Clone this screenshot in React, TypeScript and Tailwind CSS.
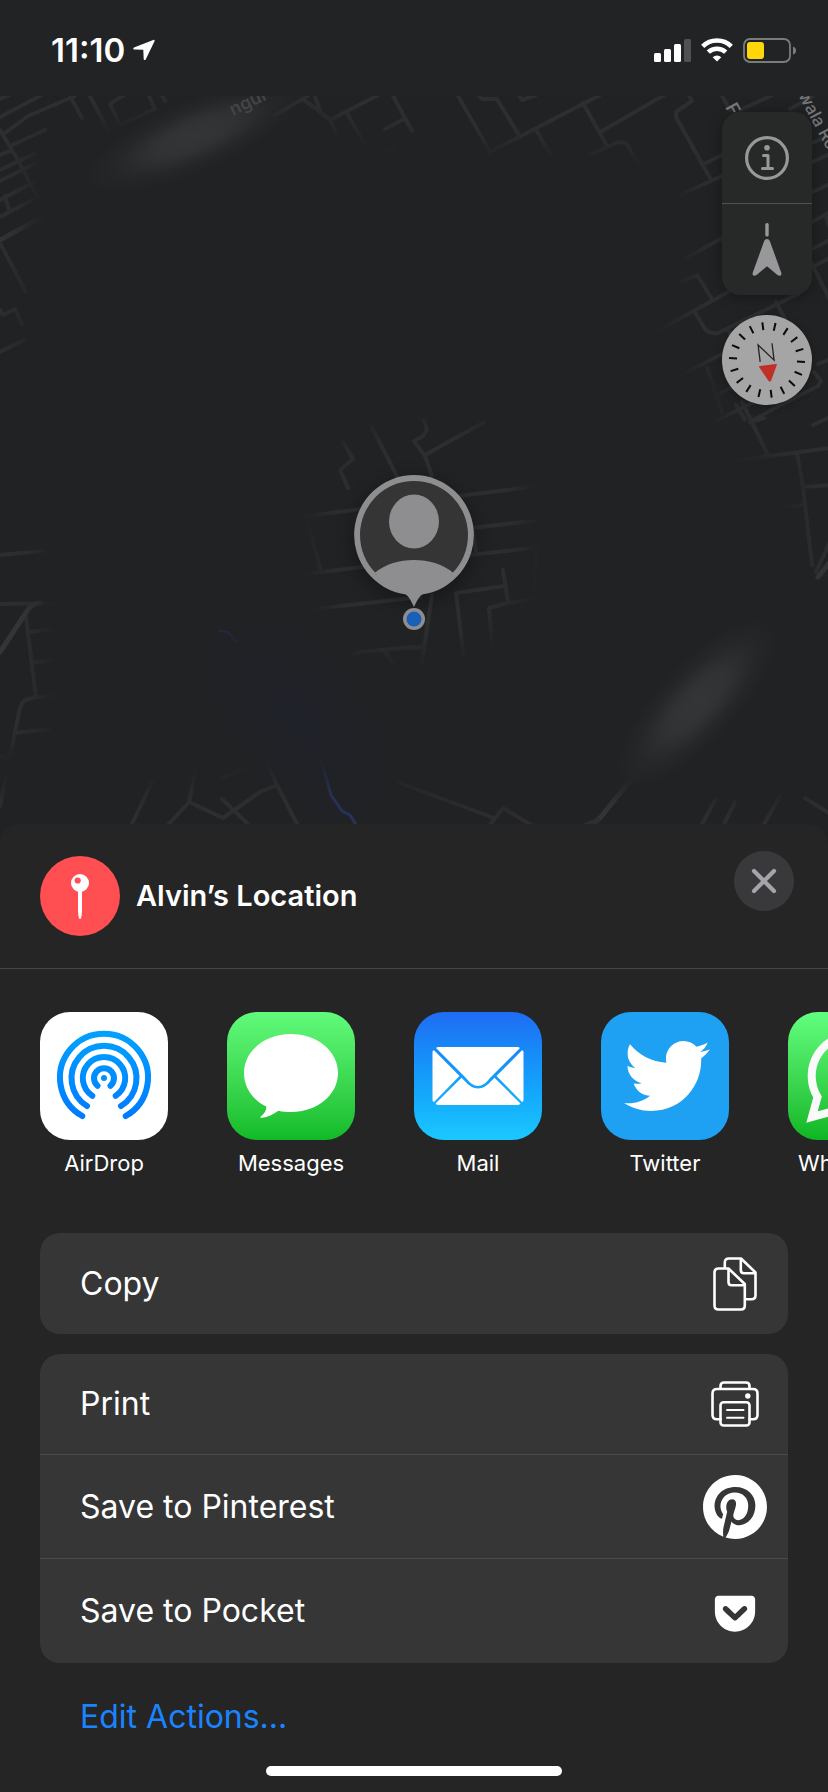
import type { ReactNode } from "react";
import { FaGetPocket, FaPinterest, FaTwitter } from "react-icons/fa";

const ROADS = [
  "M0 117 55 88 M0 99 15 92 M5 133 28 116 75 96 M0 130 18 160 38 198 M10 146 45 130",
  "M0 155 12 150 M0 170 34 154 M0 181 34 164 M0 200 34 182 M5 196 9 210 M0 217 34 199",
  "M0 243 26 292 M0 310 3 315 15 309 22 324 M0 352 24 340",
  "M70 96 82 118 M90 96 108 130 M124 95 110 104 120 125 155 109 148 94 M160 92 165 101",
  "M275 115 308 96 M302 99 315 108 330 120 M314 94 320 110 M330 120 384 92 M330 120 337 135 335 142 325 145 M347 113 372 157 394 149 M392 94 412 131 M385 129 404 119",
  "M457 94 490 152 M478 94 482 99 497 99 520 137 M518 94 522 100 536 95 M488 153 604 93 M536 130 550 154 M583 103 607 146 M602 131 666 94 M590 155 618 142 626 143 638 163",
  "M687 92 692 101 676 112 676 117 710 178 M704 164 728 152 M680 195 724 175 M720 92 730 110 M740 110 775 94 M790 109 812 97",
  "M808 145 830 135 M808 164 830 154 M808 194 830 184 M812 222 830 212 M826 217 830 228 M810 250 830 240 M810 268 830 258 M810 260 830 300",
  "M684 259 726 236 M680 282 697 275 712 299 M650 335 730 291 M694 311 705 329 Q709 334 718 333 L798 294 M728 330 734 342 M776 302 790 328 M650 335 660 362 648 370 M660 386 730 350 M707 368 722 413 M715 396 740 383 M686 436 760 399 M736 405 745 420 M742 402 768 455 M818 364 830 359 M814 372 821 381 818 386 775 408 750 422 764 418",
  "M718 463 830 448 M797 453 803 487 812 565 M804 487 830 485 M775 508 802 505 M813 425 830 417 M816 572 830 542",
  "M424 420 427 430 423 436 414 441 425 456 432 476 M425 455 484 422 M460 496 545 485 M472 528 550 519 M470 555 550 546 M473 532 476 552 M535 548 536 590",
  "M464 660 456 593 505 586 M503 570 508 602 M536 599 508 603 489 608 493 652 M432 595 421 668 M410 648 423 647",
  "M400 783 494 818 M489 826 503 808 533 826 M701 826 715 800 M723 826 735 802 M763 826 780 796 M805 798 830 814",
  "M0 555 44 551 M0 604 54 603 M26 617 36 697 M30 632 54 629 M35 662 64 660 M64 696 36 697 25 700 Q21 703 19 712 L0 806 M15 733 50 729 M0 756 6 758",
  "M370 424 398 478 M343 442 353 459 340 470 348 488 M298 517 370 508 M306 517 321 571 M298 575 370 566 M298 611 420 597 M346 662 Q350 653 362 652 L412 647 M385 652 400 674",
  "M131 826 152 782 M167 826 189 802 196 768 M189 802 223 818 260 792 277 785 M222 799 250 826 M222 778 265 758 277 785 298 826",
];

function MapCanvas() {
  return (
    <svg
      className="absolute inset-x-0 top-0 -bottom-5 h-[calc(100%+20px)] w-full"
      viewBox="0 96 828 748"
      preserveAspectRatio="xMidYMid slice"
      role="img"
      aria-label="Map"
    >
      <defs>
        <radialGradient id="water">
          <stop stopColor="#1f2129" />
          <stop offset="1" stopColor="#1f2129" stopOpacity="0" />
        </radialGradient>
        <radialGradient id="glow">
          <stop stopColor="#343537" />
          <stop offset=".35" stopColor="#343537" stopOpacity=".85" />
          <stop offset=".7" stopColor="#343537" stopOpacity=".25" />
          <stop offset="1" stopColor="#343537" stopOpacity="0" />
        </radialGradient>
        <filter id="soft" filterUnits="userSpaceOnUse" x="-60" y="0" width="960" height="900">
          <feGaussianBlur stdDeviation="12" />
        </filter>
        <filter id="shade" x="-40%" y="-40%" width="180%" height="180%">
          <feGaussianBlur stdDeviation="9" />
        </filter>
        <mask id="sharp" maskUnits="userSpaceOnUse" x="0" y="96" width="828" height="748">
          <g fill="#fff" filter="url(#soft)">
            <path d="M-60 30H900V900H-60V790H140L290 775 420 790 530 806 600 792 800 804V470L725 440V380L668 350 700 240 690 180 640 150 400 142 290 112 130 112 30 145 20 350 38 540 42 740-60 760Z" />
            <path d="M345 440 440 415 500 430 525 500V590L480 640 400 655 350 650 320 590V480Z" />
          </g>
        </mask>
      </defs>
      <rect x="0" y="96" width="828" height="748" fill="#212224" />
      <ellipse rx="130" ry="70" fill="url(#water)" transform="translate(296 718) rotate(52)" />
      <g mask="url(#sharp)" fill="none" stroke="#2d2e30" strokeWidth="4" strokeLinejoin="round" strokeLinecap="round">
        {ROADS.map((d) => (
          <path key={d} d={d} />
        ))}
        <path d="M0 240 44 216" stroke="#313234" strokeWidth="5" />
        <path d="M0 652 27 611Q31 604 40 603M818 577 830 562M588 828 600 818 632 778" stroke="#343537" strokeWidth="5" />
        <path d="M584 826 598 820" strokeWidth="5" />
        <path d="M320 756 331 795 342 811 350 815 358 828" stroke="#28325a" strokeWidth="3" />
      </g>
      <path d="M218 631 228 632 237 643" fill="none" stroke="#23283d" strokeWidth="2" />
      <g fill="url(#glow)">
        <ellipse rx="118" ry="36" transform="translate(194 136) rotate(-23)" />
        <ellipse rx="112" ry="40" transform="translate(697 703) rotate(-47)" />
      </g>
      <g fontFamily="Inter, sans-serif" fontWeight="600">
        <text transform="translate(233 116) rotate(-26)" fill="#434446" fontSize="18">ngur</text>
        <text transform="translate(725 107) rotate(62)" fill="#77787a" fontSize="18">F</text>
        <text transform="translate(798 95) rotate(62)" fill="#77787a" fontSize="17" fontWeight="500">wala Road</text>
      </g>
      <g>
        <circle cx="414" cy="540" r="62" fill="#000" opacity=".3" filter="url(#shade)" />
        <path d="M414 475a60 60 0 0 1 9 119.300C419 596 417 601 414 607 411 601 409 596 405 594.300A60 60 0 0 1 414 475Z" fill="#8e8e90" />
        <circle cx="414" cy="535" r="54" fill="#353535" />
        <ellipse cx="414" cy="521.500" rx="25" ry="27" fill="#8e8e90" />
        <path d="M375 572.500C386 564 399 560 414 560s28 4 39 12.500L440 588 414 592 388 588Z" fill="#8e8e90" />
        <circle cx="414" cy="619" r="11" fill="#8e8e90" />
        <circle cx="414" cy="619" r="7.500" fill="#1a5fb8" />
      </g>
    </svg>
  );
}

function Compass() {
  const ticks = Array.from({ length: 18 }, (_, i) => i * 20 - 7);
  return (
    <svg viewBox="0 0 90 90" className="size-full">
      <circle cx="45" cy="45" r="45" fill="#a5a5a6" />
      {ticks.map((angle) => (
        <path key={angle} d="M45 7v8" stroke="#0b0b0b" strokeWidth="2" transform={`rotate(${angle} 45 45)`} />
      ))}
      <g transform="rotate(-7 45 45)">
        <path d="M38 46V29L52 46V29" fill="none" stroke="#222" strokeWidth="1.300" />
        <path d="M36.500 51.500Q35.500 50 37.500 50H53Q55 50 54 51.500L46.500 66Q45.300 67.500 44 66Z" fill="#c03029" />
      </g>
    </svg>
  );
}

function StatusBar() {
  return (
    <header className="flex h-24 items-center justify-between bg-[#222325] pr-8 pl-[51px]">
      <div className="flex items-center gap-2 pt-1">
        <span className="text-[33px] leading-10 font-semibold">11:10</span>
        <svg viewBox="0 0 22 22" className="size-[22px]" aria-hidden="true">
          <path d="M20.300 1 1 8.600C-.1 9.100 0 10.500 1.200 10.500L10.300 10.700 10.700 20C10.700 21.300 12.200 21.500 12.700 20.400L21.500 2.200C21.900 1.200 21.200.6 20.300 1Z" fill="#fff" />
        </svg>
      </div>
      <div className="flex items-center gap-[10px] pt-1">
        <svg viewBox="0 0 37 23" className="h-[23px] w-[37px]" aria-hidden="true">
          <rect y="14" width="7" height="9" rx="1.500" fill="#fff" />
          <rect x="10" y="10" width="7" height="13" rx="1.500" fill="#fff" />
          <rect x="20" y="5" width="7" height="18" rx="1.500" fill="#fff" />
          <rect x="30" width="7" height="23" rx="1.500" fill="#505153" />
        </svg>
        <svg viewBox="0 0 32 24" className="h-6 w-8" aria-hidden="true">
          <g fill="none" stroke="#fff" strokeWidth="4.600">
            <path d="M1.700 8.300A20.500 20.500 0 0 1 30.300 8.300" />
            <path d="M7.300 14.200A12.500 12.500 0 0 1 24.700 14.200" />
          </g>
          <path d="M16 23.500 11.700 19.300A6.200 6.200 0 0 1 20.300 19.300Z" fill="#fff" />
        </svg>
        <svg viewBox="0 0 53 25" className="h-[25px] w-[53px]" aria-hidden="true">
          <rect x="1" y="1" width="46" height="23" rx="6" fill="none" stroke="#7b7c7e" strokeWidth="1.800" />
          <path d="M50 8.500Q53 9.500 53 12.500T50 16.500Z" fill="#7b7c7e" />
          <rect x="4" y="4" width="17" height="17" rx="3" fill="#ffd60a" />
        </svg>
      </div>
    </header>
  );
}

function MapControls() {
  return (
    <div className="absolute top-4 right-4 flex flex-col gap-5">
      <div className="flex w-[90px] flex-col divide-y divide-[#505152] rounded-[18px] bg-[#272828] shadow-[0_2px_14px_rgba(0,0,0,0.35)]">
        <button type="button" aria-label="Map information" className="flex h-[92px] items-center justify-center">
          <svg viewBox="0 0 44 44" className="size-11">
            <circle cx="22" cy="22" r="20.400" fill="none" stroke="#98989a" strokeWidth="3.200" />
            <circle cx="22" cy="11.800" r="2.800" fill="#98989a" />
            <path d="M18.500 19.500H23V32.500M17.500 32.500H27.500" fill="none" stroke="#98989a" strokeWidth="3" strokeLinecap="round" strokeLinejoin="round" />
          </svg>
        </button>
        <button type="button" aria-label="Track heading" className="flex h-[91px] items-center justify-center">
          <svg viewBox="0 0 30 53" className="h-[53px] w-[30px]">
            <rect x="13.300" width="3.400" height="13.500" rx="1.500" fill="#98989a" />
            <path d="M15 16C16.300 16 17.200 16.700 17.800 18L29.200 49.500C30.200 52.500 27.500 53.800 25.500 52L15 43.200 4.500 52C2.500 53.800-.2 52.500.8 49.500L12.200 18C12.800 16.700 13.700 16 15 16Z" fill="#98989a" />
          </svg>
        </button>
      </div>
      <button type="button" aria-label="Compass" className="size-[90px] rounded-full shadow-[0_2px_10px_rgba(0,0,0,0.3)]">
        <Compass />
      </button>
    </div>
  );
}

function AirDropIcon() {
  return (
    <svg viewBox="0 0 128 128" className="size-full">
      <defs>
        <linearGradient id="air" gradientUnits="userSpaceOnUse" x1="0" y1="19" x2="0" y2="108">
          <stop stopColor="#00a2ff" />
          <stop offset="1" stopColor="#0079ff" />
        </linearGradient>
      </defs>
      <g fill="none" stroke="url(#air)" strokeWidth="6" strokeLinecap="round">
        <path d="M42.300 104A44 44 0 1 1 85.700 104" />
        <path d="M47 94A32.500 32.500 0 1 1 81 94" />
        <path d="M52.300 83.800A21.200 21.200 0 1 1 75.700 83.800" />
        <path d="M57.500 73.800A10 10 0 1 1 70.500 73.800" />
      </g>
      <circle cx="64" cy="66" r="3" fill="#0090ff" />
    </svg>
  );
}

function MessagesIcon() {
  return (
    <svg viewBox="0 0 128 128" className="size-full">
      <path d="M64 22C90 22 111 39 111 61S90 100 64 100C59.500 100 55.500 99.700 51.500 98.700 46 102.500 41 105 34.500 106 33.200 106 33 105 34 104.200 37.500 101.500 39.500 98.500 39.300 94.500 26 88 17 76 17 61 17 39 38 22 64 22Z" fill="#fff" />
    </svg>
  );
}

function MailIcon() {
  return (
    <svg viewBox="0 0 128 128" className="size-full">
      <g fill="#fff">
        <path d="M22 36Q23 35 25 35H103Q105 35 106 36L76 66Q70 74 64 74T52 66Z" />
        <path d="M18.500 40Q18.500 38.500 20 38.300L45.500 64 20 90Q18.500 89.500 18.500 88Z" />
        <path d="M109.500 40Q109.500 38.500 108 38.300L82.500 64 108 90Q109.500 89.500 109.500 88Z" />
        <path d="M47.500 65.800 51 69.300Q57 76.500 64 76.500T77 69.300L80.500 65.800 106.500 91.500Q105.500 93 103 93H25Q22.500 93 21.500 91.500Z" />
      </g>
    </svg>
  );
}

function WhatsAppIcon() {
  return (
    <svg viewBox="0 0 128 128" className="size-full">
      <path d="M64 23A41 41 0 0 0 29.500 85L24 105 44.500 99.500A41 41 0 1 0 64 23Z" fill="none" stroke="#fafafa" strokeWidth="8" />
      <path d="M50 42C44 44 42 52 47 60 54 73 64 81 77 83 84 84 89 78 88 72L77 67 72 73C64 70 58 64 55 57L59 52 54 42Z" fill="#fafafa" />
    </svg>
  );
}

const APPS: { name: string; tile: string; icon: ReactNode }[] = [
  { name: "AirDrop", tile: "bg-white", icon: <AirDropIcon /> },
  { name: "Messages", tile: "bg-linear-to-b from-[#61fb7b] to-[#0fbb26]", icon: <MessagesIcon /> },
  { name: "Mail", tile: "bg-linear-to-b from-[#1f6cf3] to-[#1cc8ff]", icon: <MailIcon /> },
  { name: "Twitter", tile: "bg-[#1fa1f3] pl-1", icon: <FaTwitter className="size-[86px] text-white" /> },
  { name: "WhatsApp", tile: "bg-linear-to-b from-[#61ff7e] to-[#0cb622]", icon: <WhatsAppIcon /> },
];

function CopyIcon() {
  return (
    <svg viewBox="0 0 44 54" className="h-[54px] w-11" fill="none" stroke="#fff" strokeWidth="2.600" strokeLinejoin="round">
      <path d="M5.500 11.500H15.500L31.800 27V48.500Q31.800 52.500 28 52.500H5.500Q1.500 52.500 1.500 48.500V15.500Q1.500 11.500 5.500 11.500Z" />
      <path d="M15.500 11.500V25Q15.500 28.300 18.500 28.300H31.800" />
      <path d="M11.800 11.500V5.500Q11.800 1.500 16 1.500H28L42.500 15.500V38.500Q42.500 42.200 38.500 42.200H32.500" />
      <path d="M27.800 1.500V13Q27.800 16.300 31 16.300H42" />
    </svg>
  );
}

function PrintIcon() {
  return (
    <svg viewBox="0 0 48 46" className="h-[46px] w-12" fill="none" stroke="#fff" strokeWidth="2.600" strokeLinejoin="round" strokeLinecap="round">
      <path d="M9.500 7.500V5Q9.500 1.500 13 1.500H35Q38.500 1.500 38.500 5V7.500" />
      <path d="M9.500 38.300H6Q1.500 38.300 1.500 34V12.500Q1.500 8 6 8H42Q46.500 8 46.500 12.500V34Q46.500 38.300 42 38.300H38.500" />
      <rect x="9.500" y="21.200" width="29" height="23.300" rx="3" />
      <path d="M16 29H32.500M16 36.700H32.500" strokeWidth="2" />
      <circle cx="36.800" cy="15" r="2.700" fill="#fff" stroke="none" />
    </svg>
  );
}

function ActionRow({ label, height, children }: { label: string; height: string; children: ReactNode }) {
  return (
    <li>
      <button type="button" className={`flex w-full items-center justify-between pr-[21px] pl-10 ${height}`}>
        <span className="text-[32px] leading-10">{label}</span>
        <span className="flex w-16 justify-center">{children}</span>
      </button>
    </li>
  );
}

export default function App() {
  return (
    <div className="flex min-h-screen flex-col overflow-x-hidden bg-[#202123] font-[Inter,sans-serif] text-white">
      <StatusBar />
      <main className="relative min-h-[600px] flex-1">
        <MapCanvas />
        <MapControls />
      </main>
      <section aria-label="Share" className="relative flex flex-col rounded-t-[20px] bg-[#252525]">
        <div className="flex h-[145px] items-start border-b border-[#454646] pt-8 pr-[34px] pl-10">
          <svg viewBox="0 0 80 80" className="size-20 shrink-0" aria-hidden="true">
            <circle cx="40" cy="40" r="40" fill="#ff4f52" />
            <path d="M38 33H42V55Q42 60 40.500 63H39.500Q38 60 38 55Z" fill="#fff" />
            <circle cx="40" cy="27" r="9" fill="#fff" />
            <circle cx="37.700" cy="24.500" r="3.100" fill="#ff4f52" />
          </svg>
          <h1 className="flex-1 pt-5 pl-4 text-[29px] leading-10 font-semibold">Alvin’s Location</h1>
          <button type="button" aria-label="Close" className="-mt-[5px] flex size-[60px] items-center justify-center rounded-full bg-[#39393b]">
            <svg viewBox="0 0 26 26" className="size-[26px]">
              <path d="M3 3 23 23M23 3 3 23" stroke="#a4a4ab" strokeWidth="4.200" strokeLinecap="round" />
            </svg>
          </button>
        </div>

        <ul className="flex gap-[59px] overflow-x-auto px-10 pt-[43px] [scrollbar-width:none]">
          {APPS.map((app) => (
            <li key={app.name} className="w-32 shrink-0">
              <button type="button" className="flex w-full flex-col items-center gap-[7px]">
                <span className={`flex size-32 items-center justify-center rounded-[30px] ${app.tile}`}>{app.icon}</span>
                <span className="text-[22px] leading-8">{app.name}</span>
              </button>
            </li>
          ))}
        </ul>

        <div className="flex flex-col gap-5 px-10 pt-[54px]">
          <ul className="rounded-[20px] bg-[#363636]">
            <ActionRow label="Copy" height="h-[101px]">
              <CopyIcon />
            </ActionRow>
          </ul>
          <ul className="divide-y divide-[#4a4a4a] rounded-[20px] bg-[#363636]">
            <ActionRow label="Print" height="h-[100px]">
              <PrintIcon />
            </ActionRow>
            <ActionRow label="Save to Pinterest" height="h-[103px]">
              <FaPinterest className="size-[66px] shrink-0" />
            </ActionRow>
            <ActionRow label="Save to Pocket" height="h-[104px]">
              <FaGetPocket className="mt-1 size-[46px]" />
            </ActionRow>
          </ul>
        </div>

        <button type="button" className="mt-[34px] ml-20 self-start text-[32px] leading-10 text-[#1a84ff]">
          Edit Actions...
        </button>
        <div className="mt-[29px] mb-4 h-[10px] w-[296px] self-center rounded-full bg-white" />
      </section>
    </div>
  );
}
